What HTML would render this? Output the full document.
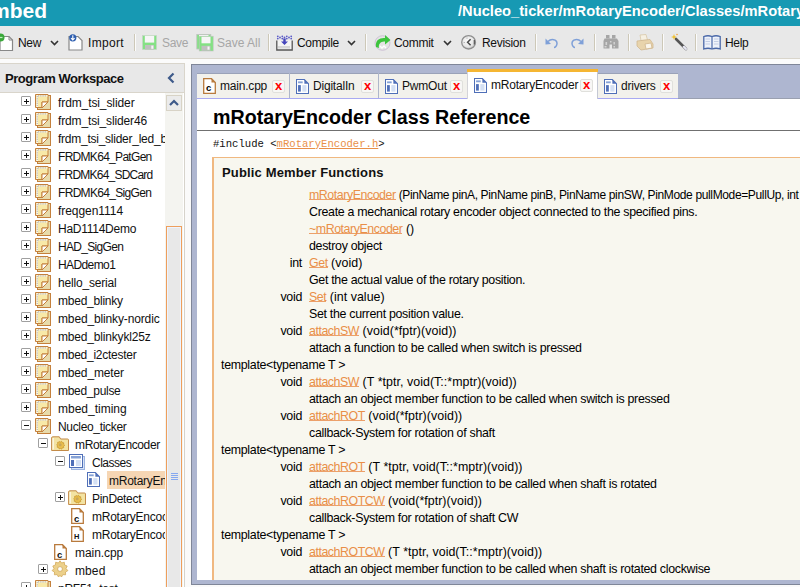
<!DOCTYPE html>
<html><head><meta charset="utf-8">
<style>
*{margin:0;padding:0;box-sizing:border-box}
html,body{width:800px;height:587px;overflow:hidden;background:#fafafa;font-family:"Liberation Sans",sans-serif;font-size:12px;color:#000;position:relative}
.a{position:absolute;white-space:nowrap}
svg{position:absolute;overflow:visible}
#hdr{position:absolute;left:0;top:0;width:800px;height:26px;background:#1799b3}
#tb{position:absolute;left:0;top:26px;width:800px;height:33px;background:#e8e8e8;border-bottom:1px solid #d9d5cb}
.tt{position:absolute;top:36px;font-size:12px;letter-spacing:-0.3px;color:#111;line-height:14px;white-space:nowrap}
.dis{color:#a6a6a6}
.sep{position:absolute;top:34px;width:2px;height:17px;border-left:1px solid #cdc8b8;background:#fbfbfb}
#lp{position:absolute;left:0;top:92px;width:185px;height:495px;background:#fff;border-right:1px solid #d6d3cb}
#lph{position:absolute;left:0;top:63px;width:185px;height:30px;background:#e8e8e8;border-top:1px solid #d9d5cb;border-bottom:1px solid #d9d5cb;border-right:1px solid #d9d5cb}
.ti{position:absolute;font-size:12px;letter-spacing:-0.25px;line-height:14px;color:#111;white-space:nowrap}
.pb{position:absolute;width:10px;height:10px;border:1px solid #a0a0a0;background:#fff;border-radius:1px}
.pb:before{content:"";position:absolute;left:2px;top:4px;width:5px;height:1px;background:#111}
.pb.p:after{content:"";position:absolute;left:4px;top:2px;width:1px;height:5px;background:#111}
#frame{position:absolute;left:191px;top:64px;width:620px;height:521px;background:#aeb6d0;border:1px solid #7f8698}
#content{position:absolute;left:197px;top:99px;width:620px;height:481px;background:#fff;overflow:hidden}
.tab{position:absolute;top:73px;height:26px;background:#f2f1ec;border-top:1px solid #9aa2b8}
.tl{position:absolute;top:6px;font-size:12px;letter-spacing:-0.2px;line-height:14px;color:#111;white-space:nowrap}
.x{position:absolute;top:7px;width:13px;height:13px;background:#f7f7f5;border:1px solid #e0e0dc;border-radius:2px}
.x:after{content:"x";position:absolute;left:2px;top:-3px;color:#f00;font-size:13px;font-weight:bold;line-height:16px}
.lnk{color:#e98f48;text-decoration:underline;text-decoration-thickness:1px}
.r .lnk{text-decoration:none;background:linear-gradient(#eca06a,#eca06a) no-repeat 0 11px / 100% 1px}
.r .lnk{letter-spacing:-0.45px}
.pa{letter-spacing:0.05px}
.pa0{letter-spacing:-0.36px;font-size:12px}
.r{position:absolute;font-size:12.4px;letter-spacing:-0.3px;line-height:17px;color:#000;white-space:nowrap}
</style></head><body>
<svg width="0" height="0" style="position:absolute">
<defs>
<symbol id="prog" viewBox="0 0 16 16">
<rect x="2.5" y="1.5" width="13" height="14" fill="#e8dbab" stroke="#c4803c" stroke-width="1"/>
<path d="M0.5 0.5 H13 V8 H7 V13.5 H0.5 Z" fill="#f8e9a8" stroke="#c4803c" stroke-width="1"/>
<path d="M1.5 1.2 H12.5 V2.6 H3 V13 H1.5Z" fill="#fbf7ee"/>
<path d="M2.2 2 V12.5 M3 1.9 H12" stroke="#8a8a8a" stroke-width="0.8" stroke-dasharray="0.9 0.9"/>
<path d="M7 8 H13 L7 14 Z" fill="#fff" stroke="#c4803c" stroke-width="1" stroke-linejoin="round"/>
</symbol>
<symbol id="fold" viewBox="0 0 18 16">
<path d="M0.6 3 Q0.6 1.8 1.8 1.8 H8.3 L9.6 4 H16.6 Q17.5 4 17.5 5 V15.5 H0.6Z" fill="#f3e3a2" stroke="#c38b48" stroke-width="1"/>
<path d="M1.6 3 H2.8 V14.5 H1.6Z" fill="#fdf9ea"/>
<path d="M8.6 5.2 L9.8 5.6 L10.9 4.9 L11.6 6.1 L12.9 6.3 L12.8 7.6 L13.8 8.6 L12.8 9.5 L12.9 10.8 L11.6 11 L10.9 12.2 L9.8 11.5 L8.6 11.9 L8.1 10.7 L6.8 10.4 L7.1 9.1 L6.4 8 L7.4 7.2 L7.2 5.9 L8.4 5.7Z" transform="translate(-1.2 1) scale(1.08)" fill="#e8be4c" stroke="#c7962e" stroke-width="0.7"/>
<circle cx="9.2" cy="9.8" r="1.5" fill="#c9a65a"/>
</symbol>
<symbol id="cls" viewBox="0 0 16 16">
<rect x="2.5" y="2.5" width="13" height="13" fill="#d8e4f6" stroke="#9db4e0"/>
<rect x="0.5" y="0.5" width="13" height="13" fill="#fff" stroke="#4f6fb8"/>
<rect x="2" y="2" width="10" height="2.5" fill="#86a2d6"/>
<rect x="2" y="6" width="3" height="6" fill="#4f6fb8"/>
<rect x="7" y="6" width="5" height="6" fill="#d4e0f4"/>
</symbol>
<symbol id="clsf" viewBox="0 0 14 16">
<path d="M0.5 0.5 H9 L13.5 5 V15.5 H0.5Z" fill="#fff" stroke="#4f6fb8" stroke-width="1.2"/>
<path d="M9 0.5 L13.5 5 H9Z" fill="#4f6fb8"/>
<rect x="2.2" y="2.5" width="5" height="2" fill="#86a2d6"/>
<rect x="2.2" y="6.5" width="3" height="7" fill="#4f6fb8"/>
<rect x="6.8" y="6.5" width="4.5" height="7" fill="#d4e0f4"/>
</symbol>
<symbol id="cf" viewBox="0 0 13 16">
<path d="M0.7 0.7 H8.5 L12.3 4.5 V15.3 H0.7Z" fill="#fff" stroke="#b97a3c" stroke-width="1.3"/>
<path d="M8.5 0.7 L12.3 4.5 H8.5Z" fill="#b97a3c"/>
</symbol>
<symbol id="gear" viewBox="0 0 18 18">
<path d="M9 0.8 L10.6 3 L13.3 2.2 L13.6 5 L16.2 6 L15 8.6 L16.9 10.6 L14.5 12 L14.6 14.8 L11.8 14.6 L10.5 17 L9 15.4 L7.5 17 L6.2 14.6 L3.4 14.8 L3.5 12 L1.1 10.6 L3 8.6 L1.8 6 L4.4 5 L4.7 2.2 L7.4 3Z" fill="#ecd08a" stroke="#d3aa5a" stroke-width="0.8"/>
<circle cx="9" cy="9" r="2.4" fill="#fff" stroke="#c99f50" stroke-width="0.7"/>
</symbol>
</defs>
</svg>

<div id="hdr"></div>
<div class="a" style="left:-9px;top:-1px;font-size:21px;font-weight:bold;color:#fff;line-height:24px">mbed</div>
<div class="a" style="left:458px;top:2px;font-size:14.7px;font-weight:bold;color:#fff;line-height:18px">/Nucleo_ticker/mRotaryEncoder/Classes/mRotaryEncoder</div>

<div id="tb"></div>
<!-- New icon -->
<svg style="left:0;top:33px" width="16" height="18" viewBox="0 0 16 18">
<path d="M0 3.5 H9 L12.5 7 V17.5 H0Z" fill="#fff" stroke="#888" stroke-width="1.2"/>
<path d="M9 3.5 V7 H12.5" fill="none" stroke="#888" stroke-width="1"/>
<circle cx="0.5" cy="4.5" r="4" fill="#3aa83a"/>
<path d="M-1.5 4.5 H2.5" stroke="#bff0bf" stroke-width="1.2"/>
</svg>
<div class="tt" style="left:18px">New</div>
<svg class="car" style="left:50px;top:40px" width="9" height="6" viewBox="0 0 9 6"><path d="M1 1 L4.5 4.5 L8 1" fill="none" stroke="#333" stroke-width="1.6"/></svg>
<!-- Import -->
<svg style="left:68px;top:34px" width="16" height="17" viewBox="0 0 16 17">
<path d="M1 2.5 H10 L14 6.5 V16 H1Z" fill="#fff" stroke="#888" stroke-width="1.2"/>
<circle cx="4.8" cy="3.8" r="3.6" fill="#2e5fb0"/>
<path d="M4.8 1.3 V5.8 M3 4.2 L4.8 6 L6.6 4.2" fill="none" stroke="#fff" stroke-width="1.1"/>
</svg>
<div class="tt" style="left:88px;letter-spacing:0.3px">Import</div>
<div class="sep" style="left:134px"></div>
<!-- Save -->
<svg style="left:142px;top:35px" width="15" height="15" viewBox="0 0 15 15">
<rect x="0.5" y="0.5" width="14" height="14" fill="#84e184" stroke="#c8d0c8" stroke-width="0.6"/>
<rect x="2.8" y="0.8" width="9.4" height="6.8" fill="#f6f6f6"/>
<rect x="3" y="10" width="9" height="4.5" fill="#c0c0c0"/>
<rect x="9.3" y="10.6" width="2" height="3.2" fill="#f6f6f6"/>
</svg>
<div class="tt dis" style="left:162px">Save</div>
<svg style="left:196px;top:34px" width="18" height="18" viewBox="0 0 18 18">
<rect x="0.8" y="0.5" width="14" height="14.5" fill="#84e184" stroke="#c0c0c0" stroke-width="0.8"/>
<rect x="3" y="1" width="9.5" height="1.5" fill="#f6f6f6"/>
<rect x="3.2" y="2.2" width="14" height="14.8" fill="#84e184" stroke="#c4c4c4" stroke-width="0.6"/>
<rect x="5.5" y="2.8" width="9" height="6.5" fill="#f6f6f6"/>
<rect x="5.5" y="11.8" width="9" height="5" fill="#c0c0c0"/>
<rect x="11.5" y="12.5" width="2" height="3.2" fill="#f6f6f6"/>
</svg>
<div class="tt dis" style="left:217px;letter-spacing:0px">Save All</div>
<div class="sep" style="left:268px"></div>
<!-- Compile -->
<svg style="left:276px;top:35px" width="17" height="16" viewBox="0 0 17 16">
<g fill="#5a5ac8"><circle cx="1.8" cy="1.3" r="0.9"/><circle cx="6.3" cy="1.3" r="0.9"/><circle cx="10.8" cy="1.3" r="0.9"/><circle cx="15.2" cy="1.3" r="0.9"/><circle cx="4" cy="2.5" r="0.9"/><circle cx="8.5" cy="2.5" r="0.9"/><circle cx="13" cy="2.5" r="0.9"/><circle cx="1.8" cy="3.6" r="0.9"/><circle cx="6.3" cy="3.6" r="0.9"/><circle cx="10.8" cy="3.6" r="0.9"/><circle cx="15.2" cy="3.6" r="0.9"/></g>
<path d="M0.8 5.5 V15 H16.2 V5.5" fill="#f4f4f4" stroke="#555" stroke-width="1.3"/>
<path d="M7.3 3.5 V6.5 H5 L8.5 10 L12 6.5 H9.7 V3.5Z" fill="#4545bb"/>
<path d="M3 11 V13.5 M5 11 V13.5 M7 11 V13.5 M9 11 V13.5 M11 11 V13.5 M13 11 V13.5" stroke="#aaa" stroke-width="0.8"/>
</svg>
<div class="tt" style="left:297px">Compile</div>
<svg style="left:347px;top:40px" width="9" height="6" viewBox="0 0 9 6"><path d="M1 1 L4.5 4.5 L8 1" fill="none" stroke="#333" stroke-width="1.6"/></svg>
<div class="sep" style="left:365px"></div>
<!-- Commit -->
<svg style="left:374px;top:34px" width="18" height="17" viewBox="0 0 18 17">
<ellipse cx="8.5" cy="9" rx="7.5" ry="7.3" fill="#e4e4e4" stroke="#c8b8d0" stroke-width="0.8"/>
<path d="M2 13 C1 6 6 3.5 11 4 L11 1 L16.5 6 L11 10.5 L11 7.5 C7 7 4 10 5 14Z" fill="#3dc43d"/>
<path d="M6 12 L8 14 L10 12 L12 14" stroke="#fff" stroke-width="1.3" fill="none"/>
</svg>
<div class="tt" style="left:394px">Commit</div>
<svg style="left:443px;top:40px" width="9" height="6" viewBox="0 0 9 6"><path d="M1 1 L4.5 4.5 L8 1" fill="none" stroke="#333" stroke-width="1.6"/></svg>
<!-- Revision -->
<svg style="left:461px;top:35px" width="16" height="15" viewBox="0 0 16 15">
<defs><radialGradient id="rg" cx="0.45" cy="0.4" r="0.6"><stop offset="0" stop-color="#fbfbfb"/><stop offset="0.7" stop-color="#e6e6e6"/><stop offset="1" stop-color="#bdbdbd"/></radialGradient></defs>
<ellipse cx="7.6" cy="7.3" rx="6.9" ry="6.7" fill="url(#rg)" stroke="#8f8f8f" stroke-width="1.3"/>
<path d="M9.6 4.2 L6.6 7.3 L9.6 10.2" fill="none" stroke="#4a4a4a" stroke-width="1.5"/>
<path d="M13.3 5 V9.5" stroke="#555" stroke-width="1.2"/>
<circle cx="3.2" cy="7.5" r="0.6" fill="#999"/><circle cx="6" cy="3" r="0.6" fill="#999"/>
</svg>
<div class="tt" style="left:482px">Revision</div>
<div class="sep" style="left:535px"></div>
<!-- undo / redo -->
<svg style="left:545px;top:37px" width="14" height="12" viewBox="0 0 14 12">
<path d="M3 4.5 C6 1.5 12 2 12 6.5 C12 9 10 10.5 9 10.5" fill="none" stroke="#7fa0d8" stroke-width="1.5"/>
<path d="M0.5 1.5 L0.5 7.5 L6 7 Z" fill="#7fa0d8"/>
</svg>
<svg style="left:570px;top:37px" width="14" height="12" viewBox="0 0 14 12">
<path d="M11 4.5 C8 1.5 2 2 2 6.5 C2 9 4 10.5 5 10.5" fill="none" stroke="#7fa0d8" stroke-width="1.5"/>
<path d="M13.5 1.5 L13.5 7.5 L8 7 Z" fill="#7fa0d8"/>
</svg>
<div class="sep" style="left:594px"></div>
<!-- binoculars -->
<svg style="left:603px;top:35px" width="16" height="14" viewBox="0 0 16 14">
<g fill="#a6a6a6"><rect x="3" y="0" width="3.5" height="3.5"/><rect x="9" y="0" width="3.5" height="3.5"/><path d="M1.5 3.5 H6.5 V13.5 H0.5 V6Z"/><path d="M9 3.5 H14 L15.5 6 V13.5 H9Z"/><rect x="6" y="3.5" width="3.5" height="6"/></g>
<g fill="#d4d4d4"><rect x="2.5" y="7" width="1.6" height="3"/><rect x="10.5" y="7" width="1.4" height="2.5"/><rect x="7" y="6" width="1.5" height="1.5"/><rect x="1.5" y="11" width="2" height="1.5"/><rect x="10.5" y="11" width="1.5" height="1.5"/></g>
</svg>
<div class="sep" style="left:628px"></div>
<!-- printer -->
<svg style="left:636px;top:34px" width="18" height="17" viewBox="0 0 18 17">
<path d="M4 1 L10 0.5 L11.5 6 L5 6.5Z" fill="#f6f0e2" stroke="#d8c8a8" stroke-width="0.8"/>
<path d="M1 7 L14 5.5 L17 10 L17 14 L5 16 L1 12Z" fill="#e8d4ac" stroke="#d0b890" stroke-width="0.8"/>
<path d="M9 10 L15 9 L16 14 L10 15Z" fill="#faf6ec" stroke="#d0b890" stroke-width="0.8"/>
</svg>
<div class="sep" style="left:662px"></div>
<!-- wand -->
<svg style="left:670px;top:33px" width="18" height="18" viewBox="0 0 18 18">
<path d="M6 6 L16 16" stroke="#555" stroke-width="2.6" stroke-linecap="round"/>
<path d="M13.8 13.8 L16 16" stroke="#e8e8f4" stroke-width="2.2" stroke-linecap="round"/>
<path d="M4 1 L4.8 3.2 L7 4 L4.8 4.8 L4 7 L3.2 4.8 L1 4 L3.2 3.2Z" fill="#f0c030"/>
<circle cx="7" cy="1.5" r="0.8" fill="#f2a040"/>
</svg>
<div class="sep" style="left:695px"></div>
<!-- book -->
<svg style="left:703px;top:35px" width="18" height="15" viewBox="0 0 18 15">
<path d="M0.8 1.5 Q5 0 9 1.5 Q13 0 17.2 1.5 V14 Q13 12.5 9 14 Q5 12.5 0.8 14Z" fill="#eef2fa" stroke="#4a68a8" stroke-width="1.3"/>
<path d="M9 1.5 V14" stroke="#4a68a8" stroke-width="1.2"/>
<path d="M2.5 4 H7 M2.5 6.5 H7 M2.5 9 H7 M11 4 H15.5 M11 6.5 H15.5 M11 9 H15.5" stroke="#b8c4e0" stroke-width="0.8"/>
</svg>
<div class="tt" style="left:725px">Help</div>

<!-- white strip between toolbar and panels -->
<div class="a" style="left:0;top:59px;width:800px;height:5px;background:#fbfbfb"></div>

<!-- left panel -->
<div id="lp"></div>
<div id="lph"></div>
<div class="a" style="left:5px;top:71px;font-size:13px;letter-spacing:-0.45px;font-weight:bold;line-height:15px;color:#111">Program Workspace</div>
<svg style="left:166px;top:72px" width="10" height="12" viewBox="0 0 10 12"><path d="M7.5 1.5 L3 6 L7.5 10.5" fill="none" stroke="#3e5a8a" stroke-width="2.2"/></svg>

<!-- scrollbar -->
<div class="a" style="left:165px;top:93px;width:18px;height:494px;background:#f4f4f0"></div>
<div class="a" style="left:166px;top:95px;width:16px;height:16px;background:#ebebeb;border:1px solid #d8d3c6"></div>
<svg style="left:169px;top:99px" width="10" height="7" viewBox="0 0 10 7"><path d="M1 6 L5 2 L9 6" fill="none" stroke="#3e5a8a" stroke-width="2.2"/></svg>
<div class="a" style="left:166px;top:226px;width:16px;height:370px;background:#e8e8e8;border:1px solid #ee9f5c;box-shadow:inset 0 0 0 1px #eef4ff"></div>
<div class="a" style="left:171px;top:473px;width:7px;height:8px;background:repeating-linear-gradient(#86a8f0 0 1px,transparent 1px 2px)"></div>

<!-- tree -->
<div id="tree" style="position:absolute;left:0;top:93px;width:165px;height:494px;overflow:hidden">
<div style="position:absolute;left:0;top:-93px">
<div class="pb p" style="left:21px;top:96px"></div>
<svg style="left:35px;top:94px" width="16" height="16"><use href="#prog"/></svg>
<div class="ti" style="left:58px;top:96px;letter-spacing:-0.1px">frdm_tsi_slider</div>
<div class="pb p" style="left:21px;top:114px"></div>
<svg style="left:35px;top:112px" width="16" height="16"><use href="#prog"/></svg>
<div class="ti" style="left:58px;top:114px;letter-spacing:-0.14px">frdm_tsi_slider46</div>
<div class="pb p" style="left:21px;top:132px"></div>
<svg style="left:35px;top:130px" width="16" height="16"><use href="#prog"/></svg>
<div class="ti" style="left:58px;top:132px;letter-spacing:-0.25px">frdm_tsi_slider_led_b</div>
<div class="pb p" style="left:21px;top:150px"></div>
<svg style="left:35px;top:148px" width="16" height="16"><use href="#prog"/></svg>
<div class="ti" style="left:58px;top:150px;letter-spacing:-0.7px">FRDMK64_PatGen</div>
<div class="pb p" style="left:21px;top:168px"></div>
<svg style="left:35px;top:166px" width="16" height="16"><use href="#prog"/></svg>
<div class="ti" style="left:58px;top:168px;letter-spacing:-0.78px">FRDMK64_SDCard</div>
<div class="pb p" style="left:21px;top:186px"></div>
<svg style="left:35px;top:184px" width="16" height="16"><use href="#prog"/></svg>
<div class="ti" style="left:58px;top:186px;letter-spacing:-0.68px">FRDMK64_SigGen</div>
<div class="pb p" style="left:21px;top:204px"></div>
<svg style="left:35px;top:202px" width="16" height="16"><use href="#prog"/></svg>
<div class="ti" style="left:58px;top:204px;letter-spacing:-0.05px">freqgen1114</div>
<div class="pb p" style="left:21px;top:222px"></div>
<svg style="left:35px;top:220px" width="16" height="16"><use href="#prog"/></svg>
<div class="ti" style="left:58px;top:222px;letter-spacing:-0.26px">HaD1114Demo</div>
<div class="pb p" style="left:21px;top:240px"></div>
<svg style="left:35px;top:238px" width="16" height="16"><use href="#prog"/></svg>
<div class="ti" style="left:58px;top:240px;letter-spacing:-0.68px">HAD_SigGen</div>
<div class="pb p" style="left:21px;top:258px"></div>
<svg style="left:35px;top:256px" width="16" height="16"><use href="#prog"/></svg>
<div class="ti" style="left:58px;top:258px;letter-spacing:-0.6px">HADdemo1</div>
<div class="pb p" style="left:21px;top:276px"></div>
<svg style="left:35px;top:274px" width="16" height="16"><use href="#prog"/></svg>
<div class="ti" style="left:58px;top:276px;letter-spacing:-0.19px">hello_serial</div>
<div class="pb p" style="left:21px;top:294px"></div>
<svg style="left:35px;top:292px" width="16" height="16"><use href="#prog"/></svg>
<div class="ti" style="left:58px;top:294px;letter-spacing:-0.23px">mbed_blinky</div>
<div class="pb p" style="left:21px;top:312px"></div>
<svg style="left:35px;top:310px" width="16" height="16"><use href="#prog"/></svg>
<div class="ti" style="left:58px;top:312px;letter-spacing:-0.14px">mbed_blinky-nordic</div>
<div class="pb p" style="left:21px;top:330px"></div>
<svg style="left:35px;top:328px" width="16" height="16"><use href="#prog"/></svg>
<div class="ti" style="left:58px;top:330px;letter-spacing:-0.18px">mbed_blinkykl25z</div>
<div class="pb p" style="left:21px;top:348px"></div>
<svg style="left:35px;top:346px" width="16" height="16"><use href="#prog"/></svg>
<div class="ti" style="left:58px;top:348px;letter-spacing:-0.26px">mbed_i2ctester</div>
<div class="pb p" style="left:21px;top:366px"></div>
<svg style="left:35px;top:364px" width="16" height="16"><use href="#prog"/></svg>
<div class="ti" style="left:58px;top:366px;letter-spacing:-0.16px">mbed_meter</div>
<div class="pb p" style="left:21px;top:384px"></div>
<svg style="left:35px;top:382px" width="16" height="16"><use href="#prog"/></svg>
<div class="ti" style="left:58px;top:384px;letter-spacing:-0.29px">mbed_pulse</div>
<div class="pb p" style="left:21px;top:402px"></div>
<svg style="left:35px;top:400px" width="16" height="16"><use href="#prog"/></svg>
<div class="ti" style="left:58px;top:402px;letter-spacing:0.0px">mbed_timing</div>
<div class="pb" style="left:21px;top:420px"></div>
<svg style="left:35px;top:418px" width="16" height="16"><use href="#prog"/></svg>
<div class="ti" style="left:58px;top:420px;letter-spacing:-0.33px">Nucleo_ticker</div>
<div class="pb" style="left:38px;top:438px"></div>
<svg style="left:51px;top:435px" width="18" height="16"><use href="#fold"/></svg>
<div class="ti" style="left:75px;top:438px;letter-spacing:-0.37px">mRotaryEncoder</div>
<div class="pb" style="left:55px;top:456px"></div>
<svg style="left:69px;top:454px" width="16" height="16"><use href="#cls"/></svg>
<div class="ti" style="left:92px;top:456px;letter-spacing:-0.5px">Classes</div>
<svg style="left:87px;top:472px" width="13" height="15"><use href="#clsf"/></svg>
<div class="a" style="left:107px;top:471px;width:58px;height:18px;background:#f6d6b4"></div>
<div class="ti" style="left:109px;top:474px;letter-spacing:-0.25px">mRotaryEn</div>
<div class="pb p" style="left:55px;top:492px"></div>
<svg style="left:68px;top:489px" width="18" height="16"><use href="#fold"/></svg>
<div class="ti" style="left:92px;top:492px;letter-spacing:-0.32px">PinDetect</div>
<svg style="left:71px;top:508px" width="13" height="16"><use href="#cf"/></svg>
<div class="a" style="left:74px;top:515px;font-size:9.5px;font-weight:bold;line-height:8px;color:#111">c</div>
<div class="ti" style="left:92px;top:510px;letter-spacing:-0.25px">mRotaryEncoc</div>
<svg style="left:71px;top:526px" width="13" height="16"><use href="#cf"/></svg>
<div class="a" style="left:74px;top:533px;font-size:7.5px;font-weight:bold;line-height:8px;color:#111">H</div>
<div class="ti" style="left:92px;top:528px;letter-spacing:-0.25px">mRotaryEncoc</div>
<svg style="left:54px;top:544px" width="13" height="16"><use href="#cf"/></svg>
<div class="a" style="left:57px;top:551px;font-size:9.5px;font-weight:bold;line-height:8px;color:#111">c</div>
<div class="ti" style="left:75px;top:546px;letter-spacing:-0.06px">main.cpp</div>
<div class="pb p" style="left:38px;top:564px"></div>
<svg style="left:51px;top:560px" width="18" height="18"><use href="#gear"/></svg>
<div class="ti" style="left:75px;top:564px;letter-spacing:0.1px">mbed</div>
<div class="pb p" style="left:21px;top:582px"></div>
<svg style="left:35px;top:580px" width="16" height="16"><use href="#prog"/></svg>
<div class="ti" style="left:58px;top:582px;letter-spacing:-0.25px">nRF51_test</div>
</div></div>

<!-- frame -->
<div id="frame"></div>
<div class="a" style="left:192px;top:65px;width:620px;height:8px;background:#aeb6d0"></div>

<!-- tabs -->
<div class="tab" style="left:197px;width:92px"></div>
<div class="a" style="left:289px;top:73px;width:1px;height:26px;background:#aeb6ca"></div>
<div class="tab" style="left:290px;width:88px"></div>
<div class="a" style="left:378px;top:73px;width:1px;height:26px;background:#aeb6ca"></div>
<div class="tab" style="left:379px;width:89px"></div>
<div class="tab" style="left:598px;width:80px"></div>
<div class="a" style="left:197px;top:98px;width:401px;height:1px;background:#a9aaf2"></div>
<div class="a" style="left:598px;top:98px;width:80px;height:1px;background:#a9aaf2"></div>
<div class="a" style="left:678px;top:98px;width:122px;height:1px;background:#9aa0b0"></div>
<div class="a" style="left:467px;top:69px;width:131px;height:30px;background:#fff;border-left:1px solid #d4d4d8;border-right:1px solid #c4c8d4"></div>
<div class="a" style="left:467px;top:69px;width:131px;height:3px;background:#f5b633"></div>

<svg style="left:203px;top:78px" width="13" height="16"><use href="#cf"/></svg>
<div class="a" style="left:206px;top:84px;font-size:9.5px;font-weight:bold;line-height:8px">c</div>
<div class="tl" style="left:220px;top:79px">main.cpp</div>
<div class="x" style="left:272px;top:80px"></div>
<svg style="left:296px;top:79px" width="13" height="15"><use href="#clsf"/></svg>
<div class="tl" style="left:313px;top:79px">DigitalIn</div>
<div class="x" style="left:361px;top:80px"></div>
<svg style="left:385px;top:79px" width="13" height="15"><use href="#clsf"/></svg>
<div class="tl" style="left:402px;top:79px">PwmOut</div>
<div class="x" style="left:450px;top:80px"></div>
<svg style="left:474px;top:78px" width="13" height="15"><use href="#clsf"/></svg>
<div class="tl" style="left:491px;top:78px">mRotaryEncoder</div>
<div class="x" style="left:580px;top:79px"></div>
<svg style="left:604px;top:79px" width="13" height="15"><use href="#clsf"/></svg>
<div class="tl" style="left:621px;top:79px">drivers</div>
<div class="x" style="left:660px;top:80px"></div>

<!-- content -->
<div id="content">
<div class="a" style="left:16px;top:6px;font-size:19.7px;font-weight:bold;line-height:24px;color:#000">mRotaryEncoder Class Reference</div>
<div class="a" style="left:0;top:31px;width:620px;height:1px;background:#707070"></div>
<div class="a" style="left:16px;top:38px;font-family:'Liberation Mono',monospace;font-size:10.6px;line-height:14px;color:#111">#include &lt;<span class="lnk">mRotaryEncoder.h</span>&gt;</div>
<div class="a" style="left:15px;top:58px;width:700px;height:500px;background:#f8f7ef;border:1px solid #f0b880;border-width:1px 1px 0 2px"></div>
<div class="a" style="left:25px;top:66px;font-size:13px;letter-spacing:0.15px;font-weight:bold;line-height:16px;color:#111">Public Member Functions</div>
<div class="r" style="left:112px;top:88px"><span class="lnk">mRotaryEncoder</span><span class="pa0"> (PinName pinA, PinName pinB, PinName pinSW, PinMode pullMode=PullUp, int debounceTime_us=1000)</span></div>
<div class="r" style="left:112px;top:105px">Create a mechanical rotary encoder object connected to the specified pins.</div>
<div class="r" style="left:112px;top:122px"><span class="lnk">~mRotaryEncoder</span><span class="pa"> ()</span></div>
<div class="r" style="left:112px;top:139px">destroy object</div>
<div class="r" style="right:515px;top:156px">int</div>
<div class="r" style="left:112px;top:156px"><span class="lnk">Get</span><span class="pa"> (void)</span></div>
<div class="r" style="left:112px;top:173px">Get the actual value of the rotary position.</div>
<div class="r" style="right:515px;top:190px">void</div>
<div class="r" style="left:112px;top:190px"><span class="lnk">Set</span><span class="pa"> (int value)</span></div>
<div class="r" style="left:112px;top:207px">Set the current position value.</div>
<div class="r" style="right:515px;top:224px">void</div>
<div class="r" style="left:112px;top:224px"><span class="lnk">attachSW</span><span class="pa"> (void(*fptr)(void))</span></div>
<div class="r" style="left:112px;top:241px">attach a function to be called when switch is pressed</div>
<div class="r" style="left:24px;top:258px">template&lt;typename T &gt;</div>
<div class="r" style="right:515px;top:275px">void</div>
<div class="r" style="left:112px;top:275px"><span class="lnk">attachSW</span><span class="pa"> (T *tptr, void(T::*mptr)(void))</span></div>
<div class="r" style="left:112px;top:292px">attach an object member function to be called when switch is pressed</div>
<div class="r" style="right:515px;top:309px">void</div>
<div class="r" style="left:112px;top:309px"><span class="lnk">attachROT</span><span class="pa"> (void(*fptr)(void))</span></div>
<div class="r" style="left:112px;top:326px">callback-System for rotation of shaft</div>
<div class="r" style="left:24px;top:343px">template&lt;typename T &gt;</div>
<div class="r" style="right:515px;top:360px">void</div>
<div class="r" style="left:112px;top:360px"><span class="lnk">attachROT</span><span class="pa"> (T *tptr, void(T::*mptr)(void))</span></div>
<div class="r" style="left:112px;top:377px">attach an object member function to be called when shaft is rotated</div>
<div class="r" style="right:515px;top:394px">void</div>
<div class="r" style="left:112px;top:394px"><span class="lnk">attachROTCW</span><span class="pa"> (void(*fptr)(void))</span></div>
<div class="r" style="left:112px;top:411px">callback-System for rotation of shaft CW</div>
<div class="r" style="left:24px;top:428px">template&lt;typename T &gt;</div>
<div class="r" style="right:515px;top:445px">void</div>
<div class="r" style="left:112px;top:445px"><span class="lnk">attachROTCW</span><span class="pa"> (T *tptr, void(T::*mptr)(void))</span></div>
<div class="r" style="left:112px;top:462px">attach an object member function to be called when shaft is rotated clockwise</div>
<div class="r" style="right:515px;top:479px">void</div>
<div class="r" style="left:112px;top:479px"><span class="lnk">attachROTCCW</span><span class="pa"> (void(*fptr)(void))</span></div>
</div>
</body></html>
